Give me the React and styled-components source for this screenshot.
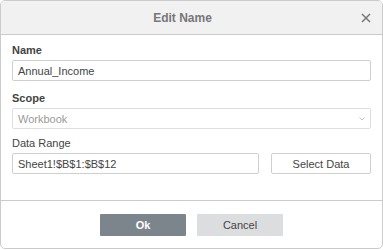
import React from 'react';
import styled, { createGlobalStyle } from 'styled-components';

const GlobalStyle = createGlobalStyle`
  html, body {
    margin: 0;
    padding: 0;
    background: #ffffff;
  }
  body {
    font-family: "Liberation Sans", Arial, sans-serif;
    color: #444;
  }
`;

const Dialog = styled.div`
  box-sizing: border-box;
  width: 383px;
  height: 249px;
  border: 1px solid #cbcbcb;
  border-radius: 5px;
  overflow: hidden;
  display: flex;
  flex-direction: column;
  background: #fff;
`;

const Header = styled.div`
  position: relative;
  height: 33px;
  flex-shrink: 0;
  display: flex;
  align-items: center;
  justify-content: center;
  padding-right: 18px;
  background: #f1f1f1;
  border-bottom: 1px solid #cbcbcb;
`;

const Title = styled.span`
  font-size: 12px;
  font-weight: bold;
  color: #777;
`;

const CloseButton = styled.button`
  position: absolute;
  right: 10px;
  top: 11px;
  width: 12px;
  height: 12px;
  padding: 0;
  border: 0;
  background: none;
  display: flex;
  align-items: center;
  justify-content: center;
`;

const Body = styled.div`
  flex: 1;
  padding: 8px 11px 0 11px;
  display: flex;
  flex-direction: column;
`;

const Label = styled.div`
  font-size: 11px;
  line-height: 14px;
  font-weight: ${(p) => (p.$bold ? 'bold' : 'normal')};
  color: #444;
  margin-top: ${(p) => p.$top || 0}px;
  margin-bottom: 3px;
`;

const Input = styled.div`
  box-sizing: border-box;
  height: 21px;
  flex: 1;
  border: 1px solid ${(p) => (p.$disabled ? '#dedede' : '#cfcfcf')};
  border-radius: 2px;
  padding: 0 5px;
  display: flex;
  align-items: center;
  justify-content: space-between;
  font-size: 11px;
  color: ${(p) => (p.$disabled ? '#9a9a9a' : '#444')};
`;

const Row = styled.div`
  display: flex;
  gap: 12px;
`;

const SideButton = styled.button`
  box-sizing: border-box;
  width: 100px;
  height: 21px;
  border: 1px solid #cfcfcf;
  border-radius: 2px;
  background: #fff;
  font-family: inherit;
  font-size: 11px;
  color: #444;
  padding: 0;
`;

const Footer = styled.div`
  height: 47px;
  flex-shrink: 0;
  border-top: 1px solid #cbcbcb;
  display: flex;
  justify-content: center;
  align-items: center;
  gap: 11px;
`;

const FooterButton = styled.button`
  box-sizing: border-box;
  width: 86px;
  height: 22px;
  border: 0;
  border-radius: 1px;
  background: ${(p) => (p.$primary ? '#7d858c' : '#dcdddf')};
  color: ${(p) => (p.$primary ? '#fff' : '#444')};
  font-family: inherit;
  font-size: 11px;
  font-weight: ${(p) => (p.$primary ? 'bold' : 'normal')};
  padding: 0;
`;

const CloseIcon = () => (
  <svg width="10" height="10" viewBox="0 0 10 10">
    <path d="M1 1L9 9M9 1L1 9" stroke="#777" strokeWidth="1.5" fill="none" />
  </svg>
);

const Chevron = () => (
  <svg width="6" height="4" viewBox="0 0 6 4">
    <path d="M0.5 0.5L3 3L5.5 0.5" stroke="#b5b5b5" strokeWidth="0.8" fill="none" />
  </svg>
);

export default function App() {
  return (
    <>
      <GlobalStyle />
      <Dialog>
        <Header>
          <Title>Edit Name</Title>
          <CloseButton aria-label="Close">
            <CloseIcon />
          </CloseButton>
        </Header>
        <Body>
          <Label $bold>Name</Label>
          <Row>
            <Input>Annual_Income</Input>
          </Row>
          <Label $bold $top={10}>Scope</Label>
          <Row>
            <Input $disabled>
              Workbook
              <Chevron />
            </Input>
          </Row>
          <Label $top={7}>Data Range</Label>
          <Row>
            <Input>Sheet1!$B$1:$B$12</Input>
            <SideButton>Select Data</SideButton>
          </Row>
        </Body>
        <Footer>
          <FooterButton $primary>Ok</FooterButton>
          <FooterButton>Cancel</FooterButton>
        </Footer>
      </Dialog>
    </>
  );
}
